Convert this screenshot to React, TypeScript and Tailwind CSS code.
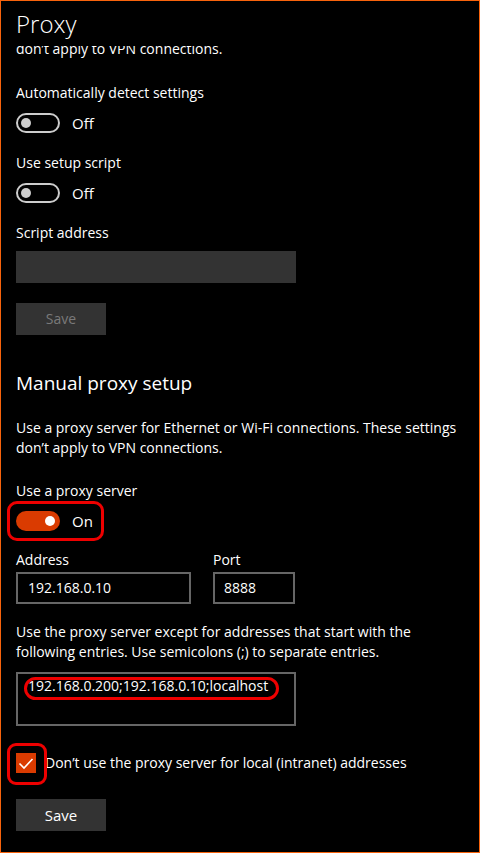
import { Fragment } from "react";

interface IToggle {
  on: boolean;
}
const Toggle = ({ on }: IToggle) => {
  return (
    <div className="flex items-center h-5">
      {on ? (
        <div className="w-11 h-5 rounded-full bg-[#da3b01] flex items-center justify-end pr-[5px]">
          <div className="w-[10px] h-[10px] rounded-full bg-white" />
        </div>
      ) : (
        <div className="w-11 h-5 rounded-full border-2 border-[#cccccc] flex items-center pl-[3px]">
          <div className="w-[10px] h-[10px] rounded-full bg-[#cccccc]" />
        </div>
      )}
      <span className="ml-3 leading-5 text-[15px]">{on ? "On" : "Off"}</span>
    </div>
  );
};

const Lines = ({ lines }: { lines: string[] }) => (
  <>
    {lines.map((l, i) => (
      <Fragment key={i}>
        {l}
        {i < lines.length - 1 && <br />}
      </Fragment>
    ))}
  </>
);

export default function App() {
  return (
    <div className="w-[480px] h-[853px] bg-black text-white border border-[#f7630c] overflow-hidden flex flex-col font-['Open_Sans',sans-serif] text-[14px] leading-5">
      {/* header */}
      <div className="h-[45px] pl-[15px] shrink-0">
        <h1 className="text-[24px] leading-[45px] font-light">Proxy</h1>
      </div>

      <div className="flex-1 overflow-hidden pl-[15px]">
        {/* scrolled-away description, only its lower part shows */}
        <div className="h-[12px] overflow-hidden">
          <p className="mt-[-7px] whitespace-nowrap">don&#x2019;t apply to VPN connections.</p>
        </div>

        <p className="mt-[25px]">Automatically detect settings</p>
        <div className="mt-[10px]">
          <Toggle on={false} />
        </div>

        <p className="mt-5">Use setup script</p>
        <div className="mt-[10px]">
          <Toggle on={false} />
        </div>

        <p className="mt-5">Script address</p>
        <div className="mt-2 w-[280px] h-8 bg-[#333333]" />

        <button className="mt-5 w-[90px] h-8 bg-[#333333] text-[#7a7a7a] block">
          Save
        </button>

        <h2 className="mt-[34px] text-[19px] leading-7">Manual proxy setup</h2>

        <p className="mt-[21px] whitespace-nowrap">
          <Lines
            lines={[
              "Use a proxy server for Ethernet or Wi-Fi connections. These settings",
              "don\u2019t apply to VPN connections.",
            ]}
          />
        </p>

        <p className="mt-[23px]">Use a proxy server</p>
        <div className="mt-[10px] relative w-fit">
          <Toggle on={true} />
          <span className="absolute left-[-9px] top-[-10px] w-[97px] h-[40px] border-[3px] border-[#ee0000] rounded-[10px]" />
        </div>

        <div className="mt-[19px] flex gap-[22px]">
          <div className="flex flex-col">
            <span>Address</span>
            <div className="mt-[2px] w-[175px] h-8 border-2 border-[#666666] flex items-center pl-[10px]">
              192.168.0.10
            </div>
          </div>
          <div className="flex flex-col">
            <span>Port</span>
            <div className="mt-[2px] w-[82px] h-8 border-2 border-[#666666] flex items-center pl-[9px]">
              8888
            </div>
          </div>
        </div>

        <p className="mt-[18px] whitespace-nowrap">
          <Lines
            lines={[
              "Use the proxy server except for addresses that start with the",
              "following entries. Use semicolons (;) to separate entries.",
            ]}
          />
        </p>

        <div className="mt-[10px] w-[280px] h-[54px] border-2 border-[#666666] pl-[10px] pt-[2px] relative">
          <span className="whitespace-nowrap">192.168.0.200;192.168.0.10;localhost</span>
          <span className="absolute left-[6px] top-[3px] w-[255px] h-[23px] border-[3px] border-[#ee0000] rounded-full" />
        </div>

        <div className="mt-[27px] flex items-center">
          <div className="relative w-5 h-5 bg-[#da3b01] shrink-0">
            <svg viewBox="0 0 20 20" className="w-5 h-5" fill="none" stroke="white" strokeWidth={1.6}>
              <polyline points="3.5,10.5 8,15 16.5,6" />
            </svg>
            <span className="absolute left-[-9px] top-[-10px] w-[40px] h-[42px] border-[3px] border-[#ee0000] rounded-[9px]" />
          </div>
          <span className="ml-[9px] whitespace-nowrap">
            Don&#x2019;t use the proxy server for local (intranet) addresses
          </span>
        </div>

        <button className="mt-[26px] w-[90px] h-8 bg-[#333333] text-white text-[15px] block">
          Save
        </button>
      </div>
    </div>
  );
}
